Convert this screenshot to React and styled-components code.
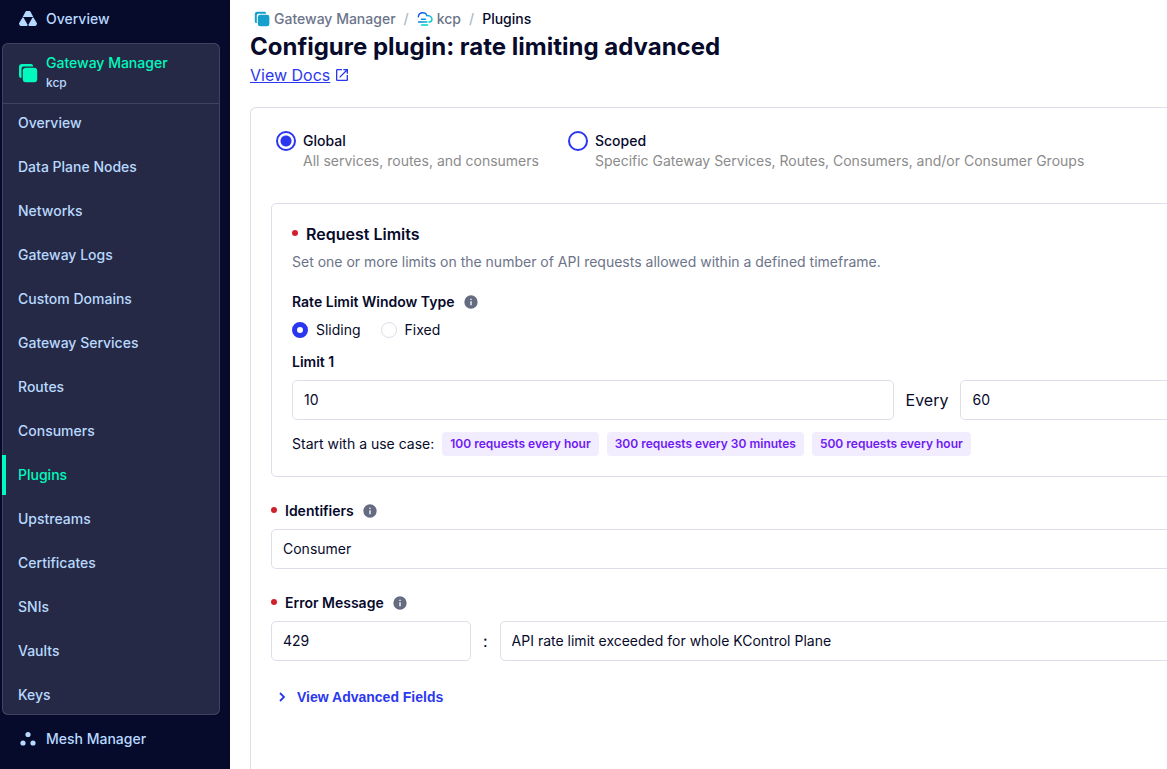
import React from 'react';
import styled, { createGlobalStyle } from 'styled-components';

const GlobalStyle = createGlobalStyle`
  * { box-sizing: border-box; }
  body { margin: 0; background: #fff; }
  body, input, select, button { font-family: Inter, "Liberation Sans", sans-serif; }
`;

const Page = styled.div`
  display: grid;
  grid-template-columns: 230px minmax(0, 1fr);
  min-height: 100vh;
  color: #070a2b;
  font-size: 14px;
  line-height: 20px;
`;

const Sidebar = styled.aside`
  background: #060a2b;
  overflow: hidden;
`;

const Nav = styled.nav`
  display: flex;
  flex-direction: column;
  gap: 4px;
  margin: -1px 10px 0 2px;
`;

const TopLink = styled.a`
  display: flex;
  align-items: center;
  gap: 8px;
  height: 40px;
  padding: 0 16px;
  color: #b8d9ff;
  font-weight: 500;
  text-decoration: none;
`;

const NavGroup = styled.section`
  border-radius: 6px;
  background: #262945;
  box-shadow: inset 0 0 0 1px #404261;
`;

const GroupHeader = styled.a`
  display: flex;
  align-items: center;
  gap: 8px;
  height: 60px;
  padding: 0 16px;
  box-shadow: 0 1px 0 #404261;
  color: #00fabe;
  font-weight: 500;
  text-decoration: none;
`;

const GroupName = styled.span`
  display: flex;
  flex-direction: column;
`;

const GroupInstance = styled.small`
  color: #b8d9ff;
  font-size: 12px;
  font-weight: 500;
`;

const NavList = styled.ul`
  display: flex;
  flex-direction: column;
  gap: 4px;
  margin: 0;
  padding: 0;
  list-style: none;
`;

const NavLink = styled.a`
  display: flex;
  align-items: center;
  height: 40px;
  padding: 0 16px 0 12px;
  border-left: 4px solid ${(p) => (p.$active ? '#00fabe' : 'transparent')};
  color: ${(p) => (p.$active ? '#00fabe' : '#b8d9ff')};
  font-weight: 500;
  text-decoration: none;
`;

const Main = styled.main`
  display: flex;
  flex-direction: column;
  padding: 9px 0 0 20px;
  overflow: hidden;
`;

const PageHeader = styled.header`
  display: flex;
  flex-direction: column;
  align-items: flex-start;
  margin-bottom: 22px;
`;

const Breadcrumbs = styled.nav`
  display: flex;
  align-items: center;
  gap: 8px;
  height: 20px;
  padding-left: 4px;
  font-weight: 500;
`;

const Crumb = styled.a`
  display: flex;
  align-items: center;
  gap: 4px;
  color: ${(p) => (p.$current ? '#070a2b' : '#6c7489')};
  text-decoration: none;
`;

const Separator = styled.span`
  color: #afb7c5;
`;

const Title = styled.h1`
  margin: 0;
  font-size: 24px;
  font-weight: 700;
  line-height: 36px;
`;

const DocsLink = styled.a`
  display: flex;
  align-items: center;
  gap: 4px;
  color: #2b37ee;
  font-size: 16px;
  line-height: 20px;
  text-decoration: none;

  span {
    text-decoration: underline;
  }
`;

const FormCard = styled.form`
  display: flex;
  flex: 1;
  flex-direction: column;
  min-width: 1354px;
  padding: 23px 20px 0;
  border: 1px solid #dddee8;
  border-bottom: 0;
  border-radius: 6px 6px 0 0;
`;

const ScopeRow = styled.div`
  display: flex;
  gap: 29px;
  margin-bottom: 32px;
  padding-left: 5px;
`;

const ScopeOption = styled.label`
  display: grid;
  grid-template-columns: 20px auto;
  column-gap: 7px;
`;

const ScopeRadio = styled.input`
  appearance: none;
  width: 20px;
  height: 20px;
  margin: 0;
  border: 2px solid #2b37ee;
  border-radius: 50%;
  background: #fff;

  &:checked {
    background: radial-gradient(circle, #2b37ee 5px, #fff 6px);
  }
`;

const ScopeName = styled.span`
  font-weight: 500;
`;

const ScopeHint = styled.span`
  grid-column: 2;
  color: #8b8b8b;
`;

const Panel = styled.section`
  display: flex;
  flex-direction: column;
  margin-bottom: 24px;
  padding: 20px;
  border: 1px solid #dddee8;
  border-radius: 5px;
`;

const PanelTitle = styled.h2`
  display: flex;
  align-items: center;
  gap: 8px;
  margin: 0 0 8px;
  font-size: 16px;
  font-weight: 600;
  line-height: 20px;
`;

const Required = styled.span`
  width: 6px;
  height: 6px;
  margin-bottom: 2px;
  border-radius: 50%;
  background: #d0202b;
`;

const PanelText = styled.p`
  margin: 0 0 20px;
  color: #6c7489;
`;

const FieldLabel = styled.label`
  display: flex;
  align-items: center;
  gap: 8px;
  margin-bottom: 8px;
  font-weight: 600;
`;

const ChoiceRow = styled.div`
  display: flex;
  gap: 20px;
  margin-bottom: 12px;
`;

const Choice = styled.label`
  display: flex;
  align-items: center;
  gap: 8px;
`;

const ChoiceRadio = styled.input`
  appearance: none;
  width: 16px;
  height: 16px;
  margin: 0;
  border: 1px solid #dddee8;
  border-radius: 50%;
  background: #fff;

  &:checked {
    border: 5px solid #2b37ee;
  }
`;

const FieldRow = styled.div`
  display: flex;
  align-items: center;
  gap: 12px;
  margin-bottom: ${(p) => p.$space}px;
  font-size: 16px;
`;

const TextBox = styled.input`
  flex: ${(p) => (p.$short ? '0 0 200px' : '1 1 0')};
  min-width: 0;
  height: 40px;
  padding: 0 11px 2px;
  border: 1px solid #dddee8;
  border-radius: 5px;
  background: #fff;
  color: #070a2b;
  font-size: 14px;
`;

const SelectBox = styled.select`
  appearance: none;
  width: 100%;
  height: 40px;
  margin-bottom: 24px;
  padding: 0 11px 2px;
  border: 1px solid #dddee8;
  border-radius: 5px;
  background: #fff;
  color: #070a2b;
  font-size: 14px;
`;

const UseCases = styled.div`
  display: flex;
  align-items: center;
  gap: 8px;
`;

const UseCase = styled.button`
  height: 24px;
  padding: 0 8px 2px;
  border: 0;
  border-radius: 4px;
  background: #f1edff;
  color: #6f1af5;
  font-size: 12px;
  font-weight: 600;
`;

const AdvancedToggle = styled.button`
  display: flex;
  align-items: center;
  align-self: flex-start;
  gap: 8px;
  height: 20px;
  padding: 0 4px;
  border: 0;
  background: none;
  color: #2b37ee;
  font-family: "Liberation Sans", Arial, sans-serif;
  font-size: 14px;
  font-weight: 700;
`;

const Icon = styled.svg`
  flex: none;
  display: block;
  width: ${(p) => p.$size}px;
  height: ${(p) => p.$size}px;
`;

const GatewayIcon = ({ size, color }) => (
  <Icon $size={size} viewBox="0 0 20 20" fill={color} aria-hidden="true">
    <rect x="4.8" y="4.8" width="14.4" height="14.4" rx="3" />
    <path d="M1 13V4a3 3 0 0 1 3-3h9a2 2 0 0 1 2 2.500H5.500a2.200 2.200 0 0 0-2 2V15A2.200 2.200 0 0 1 1 13z" />
  </Icon>
);

const OverviewIcon = () => (
  <Icon $size={20} viewBox="0 0 20 20" fill="currentColor" aria-hidden="true">
    <path d="M8.500 2h3a1 1 0 0 1 .9.500L15.300 8H4.700l2.900-5.500a1 1 0 0 1 .9-.5z" />
    <path d="M4.500 8.600h1L9.700 16l-.8 1H2.700a1 1 0 0 1-.8-.5l-.8-1.300a1 1 0 0 1 0-1z" />
    <path d="M15.500 8.600h-1L10.300 16l.8 1h6.200a1 1 0 0 0 .8-.5l.8-1.300a1 1 0 0 0 0-1z" />
  </Icon>
);

const MeshIcon = () => (
  <Icon $size={20} viewBox="0 0 20 20" fill="currentColor" aria-hidden="true">
    <circle cx="10" cy="5.500" r="2.600" />
    <circle cx="5" cy="14" r="2.600" />
    <circle cx="15" cy="14" r="2.600" />
  </Icon>
);

const CloudIcon = () => (
  <Icon $size={16} viewBox="0 0 16 16" fill="none" strokeWidth="1.400" strokeLinecap="round" aria-hidden="true">
    <defs>
      <linearGradient id="cloud" x1="0" y1="0" x2="16" y2="12" gradientUnits="userSpaceOnUse">
        <stop offset="0.200" stopColor="#1456f0" />
        <stop offset="0.900" stopColor="#00d4c8" />
      </linearGradient>
    </defs>
    <path
      d="M1.300 5.800C1.600 3.300 3.500 1.800 5.800 1.800c2 0 3.600 1.100 4.200 2.900 3-.3 5 1.300 5 3.400 0 1.700-1.300 2.900-3 2.900M4.500 8.300h4M1.500 11H10"
      stroke="url(#cloud)"
    />
    <path d="M4.500 14h6" stroke="#00d4c8" />
  </Icon>
);

const ExternalIcon = () => (
  <Icon $size={16} viewBox="0 0 24 24" fill="currentColor" aria-hidden="true">
    <path d="M19 19H5V5h7V3H5a2 2 0 0 0-2 2v14a2 2 0 0 0 2 2h14c1.100 0 2-.9 2-2v-7h-2v7zM14 3v2h3.590l-9.830 9.830 1.410 1.410L19 6.410V10h2V3h-7z" />
  </Icon>
);

const InfoIcon = () => (
  <Icon $size={16} viewBox="0 0 24 24" fill="#656c82" aria-hidden="true">
    <path d="M12 2a10 10 0 1 0 0 20 10 10 0 0 0 0-20zm1 15h-2v-6h2v6zm0-8h-2V7h2v2z" />
  </Icon>
);

const ChevronIcon = () => (
  <Icon $size={14} viewBox="0 0 14 14" fill="none" stroke="currentColor" strokeWidth="1.800" aria-hidden="true">
    <path d="M5 3l4 4-4 4" />
  </Icon>
);

const navItems = [
  'Overview', 'Data Plane Nodes', 'Networks', 'Gateway Logs', 'Custom Domains',
  'Gateway Services', 'Routes', 'Consumers', 'Plugins', 'Upstreams',
  'Certificates', 'SNIs', 'Vaults', 'Keys',
];

const useCases = ['100 requests every hour', '300 requests every 30 minutes', '500 requests every hour'];

export default function App() {
  return (
    <>
      <GlobalStyle />
      <Page>
        <Sidebar>
          <Nav aria-label="Main">
            <TopLink href="#home"><OverviewIcon />Overview</TopLink>
            <NavGroup>
              <GroupHeader href="#gateway-manager">
                <GatewayIcon size={20} color="#00fabe" />
                <GroupName>
                  Gateway Manager
                  <GroupInstance>kcp</GroupInstance>
                </GroupName>
              </GroupHeader>
              <NavList>
                {navItems.map((name) => (
                  <li key={name}>
                    <NavLink href={`#${name}`} $active={name === 'Plugins'}>{name}</NavLink>
                  </li>
                ))}
              </NavList>
            </NavGroup>
            <TopLink href="#mesh"><MeshIcon />Mesh Manager</TopLink>
          </Nav>
        </Sidebar>
        <Main>
          <PageHeader>
            <Breadcrumbs aria-label="Breadcrumb">
              <Crumb href="#gateway-manager"><GatewayIcon size={16} color="#169fcc" />Gateway Manager</Crumb>
              <Separator>/</Separator>
              <Crumb href="#kcp"><CloudIcon />kcp</Crumb>
              <Separator>/</Separator>
              <Crumb href="#plugins" $current>Plugins</Crumb>
            </Breadcrumbs>
            <Title>Configure plugin: rate limiting advanced</Title>
            <DocsLink href="#docs"><span>View Docs</span><ExternalIcon /></DocsLink>
          </PageHeader>
          <FormCard>
            <ScopeRow>
              <ScopeOption>
                <ScopeRadio type="radio" name="scope" defaultChecked />
                <ScopeName>Global</ScopeName>
                <ScopeHint>All services, routes, and consumers</ScopeHint>
              </ScopeOption>
              <ScopeOption>
                <ScopeRadio type="radio" name="scope" />
                <ScopeName>Scoped</ScopeName>
                <ScopeHint>Specific Gateway Services, Routes, Consumers, and/or Consumer Groups</ScopeHint>
              </ScopeOption>
            </ScopeRow>
            <Panel>
              <PanelTitle><Required />Request Limits</PanelTitle>
              <PanelText>Set one or more limits on the number of API requests allowed within a defined timeframe.</PanelText>
              <FieldLabel as="div" id="window-type">Rate Limit Window Type<InfoIcon /></FieldLabel>
              <ChoiceRow role="radiogroup" aria-labelledby="window-type">
                <Choice><ChoiceRadio type="radio" name="window" defaultChecked />Sliding</Choice>
                <Choice><ChoiceRadio type="radio" name="window" />Fixed</Choice>
              </ChoiceRow>
              <FieldLabel htmlFor="limit">Limit 1</FieldLabel>
              <FieldRow $space={12}>
                <TextBox id="limit" defaultValue="10" />
                <label htmlFor="seconds">Every</label>
                <TextBox id="seconds" defaultValue="60" />
              </FieldRow>
              <UseCases>
                <span>Start with a use case:</span>
                {useCases.map((name) => <UseCase key={name} type="button">{name}</UseCase>)}
              </UseCases>
            </Panel>
            <FieldLabel htmlFor="identifier"><Required />Identifiers<InfoIcon /></FieldLabel>
            <SelectBox id="identifier"><option>Consumer</option></SelectBox>
            <FieldLabel htmlFor="error-code"><Required />Error Message<InfoIcon /></FieldLabel>
            <FieldRow $space={26}>
              <TextBox id="error-code" $short defaultValue="429" />
              <span>:</span>
              <TextBox aria-label="Error message" defaultValue="API rate limit exceeded for whole KControl Plane" />
            </FieldRow>
            <AdvancedToggle type="button"><ChevronIcon />View Advanced Fields</AdvancedToggle>
          </FormCard>
        </Main>
      </Page>
    </>
  );
}
